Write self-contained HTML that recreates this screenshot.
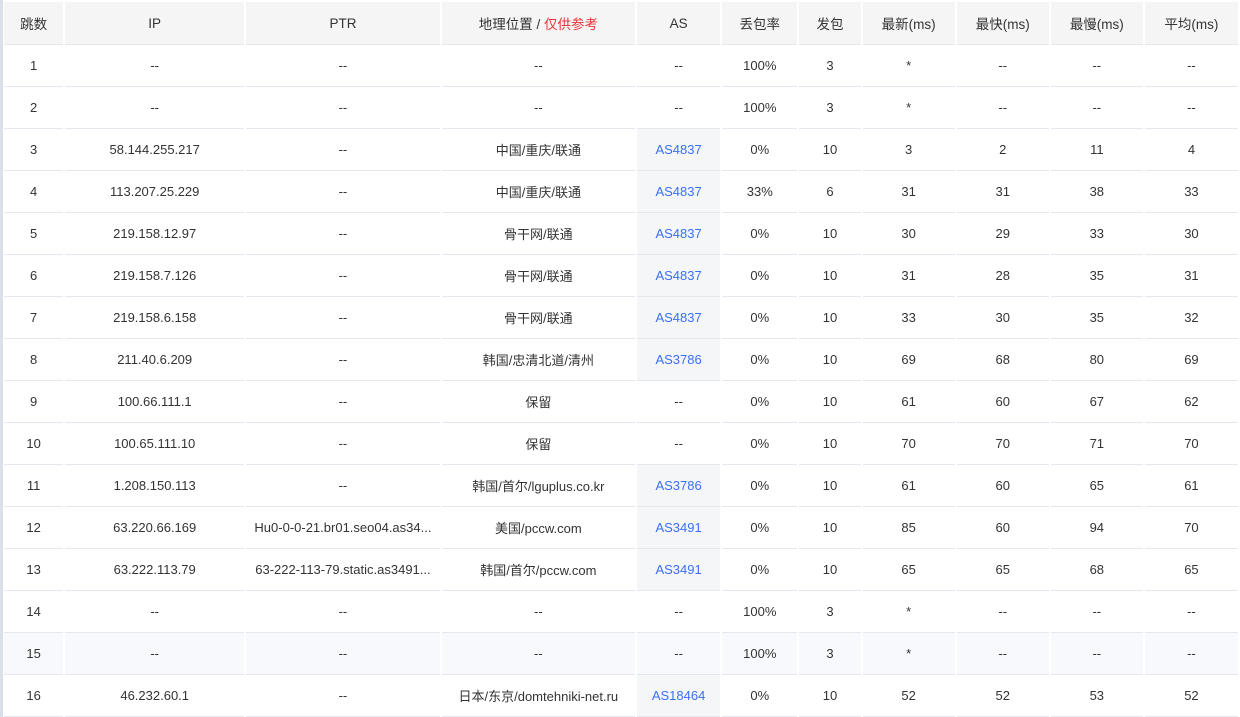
<!DOCTYPE html>
<html><head><meta charset="utf-8"><style>
html,body{margin:0;padding:0;background:#fff;width:1240px;height:717px;overflow:hidden}
.strip{position:absolute;left:0;top:0;width:3px;height:717px;background:#dadfe8}
table{position:absolute;left:2px;top:2px;border-collapse:separate;border-spacing:2px 0;table-layout:fixed;font-family:"Liberation Sans","Noto Sans CJK SC",sans-serif;font-size:13px;color:#333}
td,th{text-align:center;border-bottom:1px solid #e4e7ed;padding:0;white-space:nowrap;overflow:hidden;text-overflow:ellipsis}
th{height:42px;background:#f5f5f5;font-weight:normal;font-size:13.5px;color:#333}
td{height:41px}
td.as{background:#f5f6f8;color:#3a6ff7}
tr.h td{background:#f8f9fd}
.r{color:#e8363a}
</style></head><body><div class="strip"></div>
<table>
<colgroup><col style="width:60px"><col style="width:181px"><col style="width:194px"><col style="width:194px"><col style="width:84px"><col style="width:76px"><col style="width:62px"><col style="width:93px"><col style="width:93px"><col style="width:93px"><col style="width:94px"></colgroup>
<tr><th>跳数</th><th>IP</th><th>PTR</th><th>地理位置 / <span class="r">仅供参考</span></th><th>AS</th><th>丢包率</th><th>发包</th><th>最新(ms)</th><th>最快(ms)</th><th>最慢(ms)</th><th>平均(ms)</th></tr>
<tr><td>1</td><td>--</td><td>--</td><td>--</td><td>--</td><td>100%</td><td>3</td><td>*</td><td>--</td><td>--</td><td>--</td></tr>
<tr><td>2</td><td>--</td><td>--</td><td>--</td><td>--</td><td>100%</td><td>3</td><td>*</td><td>--</td><td>--</td><td>--</td></tr>
<tr><td>3</td><td>58.144.255.217</td><td>--</td><td>中国/重庆/联通</td><td class="as">AS4837</td><td>0%</td><td>10</td><td>3</td><td>2</td><td>11</td><td>4</td></tr>
<tr><td>4</td><td>113.207.25.229</td><td>--</td><td>中国/重庆/联通</td><td class="as">AS4837</td><td>33%</td><td>6</td><td>31</td><td>31</td><td>38</td><td>33</td></tr>
<tr><td>5</td><td>219.158.12.97</td><td>--</td><td>骨干网/联通</td><td class="as">AS4837</td><td>0%</td><td>10</td><td>30</td><td>29</td><td>33</td><td>30</td></tr>
<tr><td>6</td><td>219.158.7.126</td><td>--</td><td>骨干网/联通</td><td class="as">AS4837</td><td>0%</td><td>10</td><td>31</td><td>28</td><td>35</td><td>31</td></tr>
<tr><td>7</td><td>219.158.6.158</td><td>--</td><td>骨干网/联通</td><td class="as">AS4837</td><td>0%</td><td>10</td><td>33</td><td>30</td><td>35</td><td>32</td></tr>
<tr><td>8</td><td>211.40.6.209</td><td>--</td><td>韩国/忠清北道/清州</td><td class="as">AS3786</td><td>0%</td><td>10</td><td>69</td><td>68</td><td>80</td><td>69</td></tr>
<tr><td>9</td><td>100.66.111.1</td><td>--</td><td>保留</td><td>--</td><td>0%</td><td>10</td><td>61</td><td>60</td><td>67</td><td>62</td></tr>
<tr><td>10</td><td>100.65.111.10</td><td>--</td><td>保留</td><td>--</td><td>0%</td><td>10</td><td>70</td><td>70</td><td>71</td><td>70</td></tr>
<tr><td>11</td><td>1.208.150.113</td><td>--</td><td>韩国/首尔/lguplus.co.kr</td><td class="as">AS3786</td><td>0%</td><td>10</td><td>61</td><td>60</td><td>65</td><td>61</td></tr>
<tr><td>12</td><td>63.220.66.169</td><td>Hu0-0-0-21.br01.seo04.as34...</td><td>美国/pccw.com</td><td class="as">AS3491</td><td>0%</td><td>10</td><td>85</td><td>60</td><td>94</td><td>70</td></tr>
<tr><td>13</td><td>63.222.113.79</td><td>63-222-113-79.static.as3491...</td><td>韩国/首尔/pccw.com</td><td class="as">AS3491</td><td>0%</td><td>10</td><td>65</td><td>65</td><td>68</td><td>65</td></tr>
<tr><td>14</td><td>--</td><td>--</td><td>--</td><td>--</td><td>100%</td><td>3</td><td>*</td><td>--</td><td>--</td><td>--</td></tr>
<tr class="h"><td>15</td><td>--</td><td>--</td><td>--</td><td>--</td><td>100%</td><td>3</td><td>*</td><td>--</td><td>--</td><td>--</td></tr>
<tr><td>16</td><td>46.232.60.1</td><td>--</td><td>日本/东京/domtehniki-net.ru</td><td class="as">AS18464</td><td>0%</td><td>10</td><td>52</td><td>52</td><td>53</td><td>52</td></tr>
</table></body></html>
